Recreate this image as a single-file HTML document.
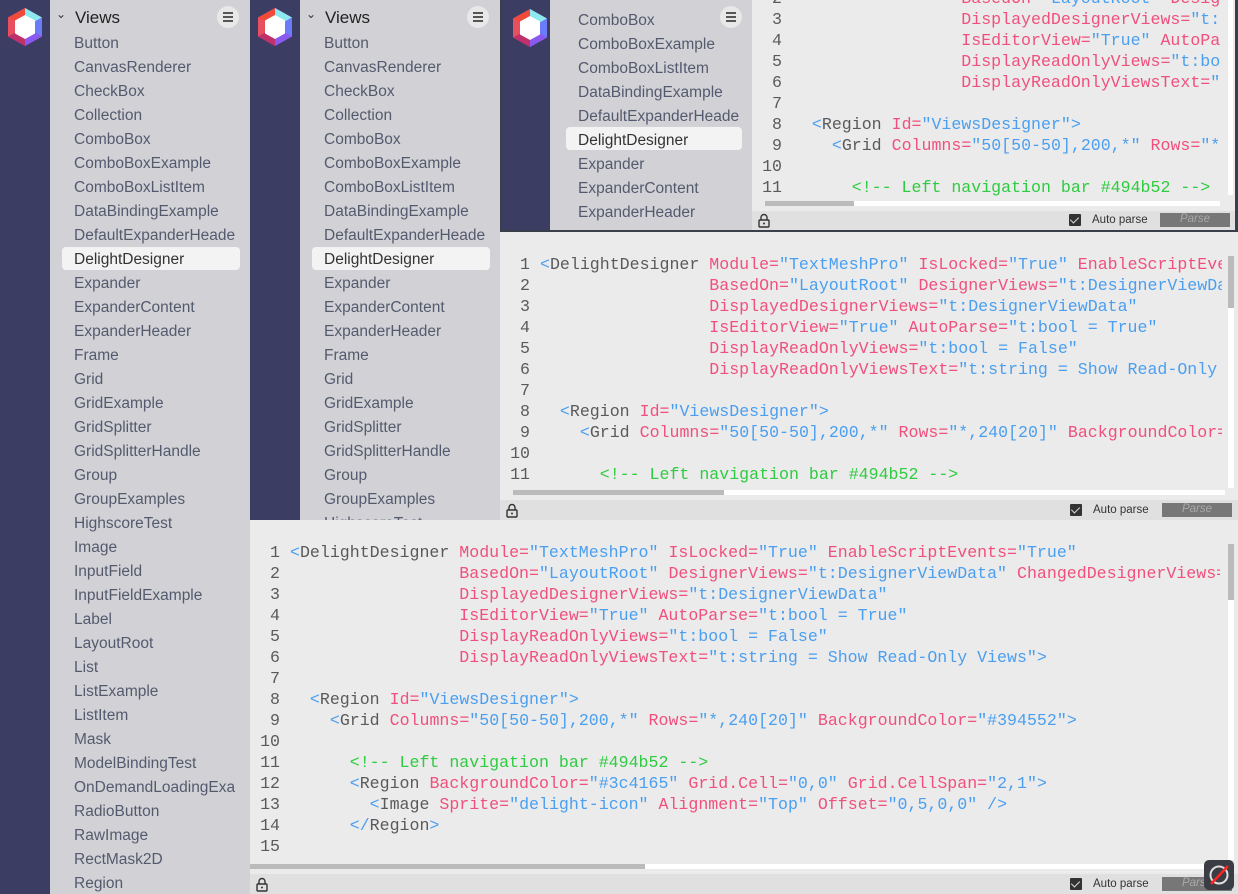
<!DOCTYPE html>
<html><head><meta charset="utf-8"><style>
*{margin:0;padding:0;box-sizing:border-box}
body{width:1238px;height:894px;overflow:hidden;background:#ebebeb;position:relative;font-family:"Liberation Sans",sans-serif}
.abs{position:absolute;overflow:hidden}
.side{background:#3c3d62}
.list{background:#d2d2d6}
.item{position:absolute;font-size:15.5px;color:#545a6e;white-space:nowrap;height:24px;line-height:24px}
.sel{position:absolute;background:#f3f3f3;border-radius:4px}
.hdr{position:absolute;font-size:17px;color:#222}
.menu{position:absolute;width:22px;height:22px;border-radius:11px;background:#e8e8e8}
.menu i{position:absolute;left:6px;width:10px;height:2px;background:#555}
.code{background:#ebebeb}
.code pre{position:absolute;font-family:"Liberation Mono",monospace;font-size:16.6px;line-height:21px;color:#5a5a5a;white-space:pre}
.ln{color:#999;text-align:right}
.t{color:#5a5a5a}.p{color:#4a9ff0}.a{color:#f0507e}.v{color:#4a9ff0}.c{color:#2ecc40}
.foot{position:absolute;background:#e0e0e0}
.chk{position:absolute;width:12px;height:12px;background:#333;border-radius:1px}
.chk:after{content:"";position:absolute;left:3px;top:1px;width:4px;height:7px;border:solid #ddd;border-width:0 1.5px 1.5px 0;transform:rotate(45deg)}
.ap{position:absolute;font-size:11.5px;color:#333}
.parse{position:absolute;background:#777;color:#aaa;font-style:italic;font-size:11.5px;text-align:center;line-height:13px}
.track{position:absolute;height:5px;background:#fff}
.thumb{position:absolute;height:5px;background:#bbb}
</style></head><body>

<svg width="0" height="0" style="position:absolute"><defs>
<g id="logo">
<polygon points="17,0 34,9.5 34,28.5 17,38 0,28.5 0,9.5" fill="#9b5ce0"/>
<polygon points="17,0 0,9.5 0,28.5 17,19" fill="#f04a3a"/>
<polygon points="17,0 34,9.5 17,19" fill="#8ee8f0"/>
<polygon points="34,9.5 34,28.5 17,19" fill="#6a7cf8"/>
<polygon points="34,28.5 17,38 17,19" fill="#8a5af0"/>
<polygon points="17,38 0,28.5 17,19" fill="#c0306a"/>
<polygon points="0,9.5 0,28.5 17,19" fill="#e85060"/>
<polygon points="17,7 27,12.5 27,25.5 17,31 7,25.5 7,12.5" fill="#fff"/>
</g></defs></svg>

<!-- Window 1 -->
<div class="abs side" style="left:0;top:0;width:50px;height:894px"><svg style="position:absolute;left:8px;top:8px" width="34" height="38"><use href="#logo"/></svg></div>
<div class="abs list" style="left:50px;top:0;width:200px;height:894px">
<span class="hdr" style="left:6px;top:7px;font-size:12px;color:#333">&#8964;</span>
<span class="hdr" style="left:25px;top:8px">Views</span>
<div class="menu" style="left:167px;top:6px"><i style="top:6px"></i><i style="top:10px"></i><i style="top:14px"></i></div>
<div class="sel" style="left:12px;top:247px;width:178px;height:23px"></div>
<div style="position:absolute;left:24px;top:32px">
<div class="item" style="top:0">Button</div><div class="item" style="top:24px">CanvasRenderer</div><div class="item" style="top:48px">CheckBox</div><div class="item" style="top:72px">Collection</div><div class="item" style="top:96px">ComboBox</div><div class="item" style="top:120px">ComboBoxExample</div><div class="item" style="top:144px">ComboBoxListItem</div><div class="item" style="top:168px">DataBindingExample</div><div class="item" style="top:192px">DefaultExpanderHeade</div><div class="item" style="top:216px;color:#333">DelightDesigner</div><div class="item" style="top:240px">Expander</div><div class="item" style="top:264px">ExpanderContent</div><div class="item" style="top:288px">ExpanderHeader</div><div class="item" style="top:312px">Frame</div><div class="item" style="top:336px">Grid</div><div class="item" style="top:360px">GridExample</div><div class="item" style="top:384px">GridSplitter</div><div class="item" style="top:408px">GridSplitterHandle</div><div class="item" style="top:432px">Group</div><div class="item" style="top:456px">GroupExamples</div><div class="item" style="top:480px">HighscoreTest</div><div class="item" style="top:504px">Image</div><div class="item" style="top:528px">InputField</div><div class="item" style="top:552px">InputFieldExample</div><div class="item" style="top:576px">Label</div><div class="item" style="top:600px">LayoutRoot</div><div class="item" style="top:624px">List</div><div class="item" style="top:648px">ListExample</div><div class="item" style="top:672px">ListItem</div><div class="item" style="top:696px">Mask</div><div class="item" style="top:720px">ModelBindingTest</div><div class="item" style="top:744px">OnDemandLoadingExa</div><div class="item" style="top:768px">RadioButton</div><div class="item" style="top:792px">RawImage</div><div class="item" style="top:816px">RectMask2D</div><div class="item" style="top:840px">Region</div>
</div></div>

<!-- Window1 code -->
<div class="abs code" style="left:250px;top:520px;width:988px;height:374px">
<pre class="ln" style="left:0;top:22px;width:30px">1
2
3
4
5
6
7
8
9
10
11
12
13
14
15</pre>
<pre style="left:40px;top:22px"><span class="p">&lt;</span>DelightDesigner <span class="a">Module=</span><span class="v">"TextMeshPro"</span> <span class="a">IsLocked=</span><span class="v">"True"</span> <span class="a">EnableScriptEvents=</span><span class="v">"True"</span>
                 <span class="a">BasedOn=</span><span class="v">"LayoutRoot"</span> <span class="a">DesignerViews=</span><span class="v">"t:DesignerViewData"</span> <span class="a">ChangedDesignerViews=</span>
                 <span class="a">DisplayedDesignerViews=</span><span class="v">"t:DesignerViewData"</span>
                 <span class="a">IsEditorView=</span><span class="v">"True"</span> <span class="a">AutoParse=</span><span class="v">"t:bool = True"</span>
                 <span class="a">DisplayReadOnlyViews=</span><span class="v">"t:bool = False"</span>
                 <span class="a">DisplayReadOnlyViewsText=</span><span class="v">"t:string = Show Read-Only Views"</span><span class="p">&gt;</span>

  <span class="p">&lt;</span>Region <span class="a">Id=</span><span class="v">"ViewsDesigner"</span><span class="p">&gt;</span>
    <span class="p">&lt;</span>Grid <span class="a">Columns=</span><span class="v">"50[50-50],200,*"</span> <span class="a">Rows=</span><span class="v">"*,240[20]"</span> <span class="a">BackgroundColor=</span><span class="v">"#394552"</span><span class="p">&gt;</span>

      <span class="c">&lt;!-- Left navigation bar #494b52 --&gt;</span>
      <span class="p">&lt;</span>Region <span class="a">BackgroundColor=</span><span class="v">"#3c4165"</span> <span class="a">Grid.Cell=</span><span class="v">"0,0"</span> <span class="a">Grid.CellSpan=</span><span class="v">"2,1"</span><span class="p">&gt;</span>
        <span class="p">&lt;</span>Image <span class="a">Sprite=</span><span class="v">"delight-icon"</span> <span class="a">Alignment=</span><span class="v">"Top"</span> <span class="a">Offset=</span><span class="v">"0,5,0,0"</span> <span class="p">/&gt;</span>
      <span class="p">&lt;/</span>Region<span class="p">&gt;</span>
</pre>
<div style="position:absolute;left:970px;top:0;width:18px;height:340px;background:#ebebeb"></div>
<div style="position:absolute;left:978px;top:24px;width:6px;height:316px;background:#fff"></div>
<div style="position:absolute;left:978px;top:24px;width:6px;height:56px;background:#bbb"></div>
<div class="track" style="left:0;top:344px;width:975px"></div><div class="thumb" style="left:0;top:344px;width:395px"></div>
<div class="foot" style="left:0;top:354px;width:988px;height:20px"></div>
<svg style="position:absolute;left:6px;top:357px" width="12" height="15"><path d="M3 7V4.5a3 3 0 0 1 6 0V7" fill="none" stroke="#333" stroke-width="1.4"/><rect x="1" y="7" width="10" height="7" rx="1" fill="none" stroke="#333" stroke-width="1.4"/><circle cx="6" cy="10.5" r="1" fill="#333"/></svg>
<div class="chk" style="left:820px;top:358px"></div><div class="ap" style="left:843px;top:358px">Auto parse</div>
<div class="parse" style="left:912px;top:357px;width:70px;height:14px">Parse</div>
<div style="position:absolute;left:954px;top:340px;width:30px;height:30px;background:#3a3d44;border-radius:5px">
<svg width="30" height="30"><circle cx="15" cy="15" r="8.5" fill="none" stroke="#ddd" stroke-width="2"/><line x1="7" y1="24" x2="24" y2="6" stroke="#f22" stroke-width="2.5"/></svg></div>
</div>

<!-- Window 2 -->
<div class="abs side" style="left:250px;top:0;width:50px;height:520px"><svg style="position:absolute;left:8px;top:8px" width="34" height="38"><use href="#logo"/></svg></div>
<div class="abs list" style="left:300px;top:0;width:200px;height:520px">
<span class="hdr" style="left:6px;top:7px;font-size:12px;color:#333">&#8964;</span>
<span class="hdr" style="left:25px;top:8px">Views</span>
<div class="menu" style="left:167px;top:6px"><i style="top:6px"></i><i style="top:10px"></i><i style="top:14px"></i></div>
<div class="sel" style="left:12px;top:247px;width:178px;height:23px"></div>
<div style="position:absolute;left:24px;top:32px">
<div class="item" style="top:0">Button</div><div class="item" style="top:24px">CanvasRenderer</div><div class="item" style="top:48px">CheckBox</div><div class="item" style="top:72px">Collection</div><div class="item" style="top:96px">ComboBox</div><div class="item" style="top:120px">ComboBoxExample</div><div class="item" style="top:144px">ComboBoxListItem</div><div class="item" style="top:168px">DataBindingExample</div><div class="item" style="top:192px">DefaultExpanderHeade</div><div class="item" style="top:216px;color:#333">DelightDesigner</div><div class="item" style="top:240px">Expander</div><div class="item" style="top:264px">ExpanderContent</div><div class="item" style="top:288px">ExpanderHeader</div><div class="item" style="top:312px">Frame</div><div class="item" style="top:336px">Grid</div><div class="item" style="top:360px">GridExample</div><div class="item" style="top:384px">GridSplitter</div><div class="item" style="top:408px">GridSplitterHandle</div><div class="item" style="top:432px">Group</div><div class="item" style="top:456px">GroupExamples</div><div class="item" style="top:480px">HighscoreTest</div>
</div></div>

<div class="abs code" style="left:500px;top:232px;width:738px;height:288px">
<pre class="ln" style="left:0;top:22px;width:30px">1
2
3
4
5
6
7
8
9
10
11</pre>
<pre style="left:40px;top:22px"><span class="p">&lt;</span>DelightDesigner <span class="a">Module=</span><span class="v">"TextMeshPro"</span> <span class="a">IsLocked=</span><span class="v">"True"</span> <span class="a">EnableScriptEvents=</span><span class="v">"True"</span>
                 <span class="a">BasedOn=</span><span class="v">"LayoutRoot"</span> <span class="a">DesignerViews=</span><span class="v">"t:DesignerViewData"</span> <span class="a">ChangedDesignerViews=</span>
                 <span class="a">DisplayedDesignerViews=</span><span class="v">"t:DesignerViewData"</span>
                 <span class="a">IsEditorView=</span><span class="v">"True"</span> <span class="a">AutoParse=</span><span class="v">"t:bool = True"</span>
                 <span class="a">DisplayReadOnlyViews=</span><span class="v">"t:bool = False"</span>
                 <span class="a">DisplayReadOnlyViewsText=</span><span class="v">"t:string = Show Read-Only Views"</span><span class="p">&gt;</span>

  <span class="p">&lt;</span>Region <span class="a">Id=</span><span class="v">"ViewsDesigner"</span><span class="p">&gt;</span>
    <span class="p">&lt;</span>Grid <span class="a">Columns=</span><span class="v">"50[50-50],200,*"</span> <span class="a">Rows=</span><span class="v">"*,240[20]"</span> <span class="a">BackgroundColor=</span><span class="v">"#394552"</span><span class="p">&gt;</span>

      <span class="c">&lt;!-- Left navigation bar #494b52 --&gt;</span>
</pre>
<div style="position:absolute;left:722px;top:0;width:16px;height:268px;background:#ebebeb"></div>
<div style="position:absolute;left:728px;top:24px;width:6px;height:232px;background:#fff"></div>
<div style="position:absolute;left:728px;top:24px;width:6px;height:52px;background:#bbb"></div>
<div class="track" style="left:13px;top:258px;width:712px"></div><div class="thumb" style="left:13px;top:258px;width:211px"></div>
<div class="foot" style="left:0;top:268px;width:738px;height:20px"></div>
<svg style="position:absolute;left:6px;top:271px" width="12" height="15"><path d="M3 7V4.5a3 3 0 0 1 6 0V7" fill="none" stroke="#333" stroke-width="1.4"/><rect x="1" y="7" width="10" height="7" rx="1" fill="none" stroke="#333" stroke-width="1.4"/><circle cx="6" cy="10.5" r="1" fill="#333"/></svg>
<div class="chk" style="left:570px;top:272px"></div><div class="ap" style="left:593px;top:272px">Auto parse</div>
<div class="parse" style="left:662px;top:271px;width:70px;height:14px">Parse</div>
</div>

<!-- Window 3 -->
<div class="abs" style="left:500px;top:0;width:738px;height:232px;background:#39404a">
<div class="abs side" style="left:2px;top:0;width:48px;height:230px"><svg style="position:absolute;left:11px;top:9px" width="34" height="38"><use href="#logo"/></svg></div>
<div class="abs list" style="left:50px;top:0;width:202px;height:230px">
<div class="menu" style="left:170px;top:6px"><i style="top:6px"></i><i style="top:10px"></i><i style="top:14px"></i></div>
<div class="sel" style="left:16px;top:127px;width:176px;height:23px"></div>
<div style="position:absolute;left:28px;top:9px">
<div class="item" style="top:0">ComboBox</div><div class="item" style="top:24px">ComboBoxExample</div><div class="item" style="top:48px">ComboBoxListItem</div><div class="item" style="top:72px">DataBindingExample</div><div class="item" style="top:96px">DefaultExpanderHeade</div><div class="item" style="top:120px;color:#333">DelightDesigner</div><div class="item" style="top:144px">Expander</div><div class="item" style="top:168px">ExpanderContent</div><div class="item" style="top:192px">ExpanderHeader</div><div class="item" style="top:216px">Frame</div>
</div></div>
<div class="abs code" style="left:252px;top:0;width:483px;height:230px">
<pre class="ln" style="left:0;top:-33px;width:30px">1
2
3
4
5
6
7
8
9
10
11</pre>
<pre style="left:40px;top:-33px"><span class="p">&lt;</span>DelightDesigner <span class="a">Module=</span><span class="v">"TextMeshPro"</span> <span class="a">IsLocked=</span><span class="v">"True"</span> <span class="a">EnableScriptEvents=</span><span class="v">"True"</span>
                 <span class="a">BasedOn=</span><span class="v">"LayoutRoot"</span> <span class="a">DesignerViews=</span><span class="v">"t:DesignerViewData"</span>
                 <span class="a">DisplayedDesignerViews=</span><span class="v">"t:DesignerViewData"</span>
                 <span class="a">IsEditorView=</span><span class="v">"True"</span> <span class="a">AutoParse=</span><span class="v">"t:bool = True"</span>
                 <span class="a">DisplayReadOnlyViews=</span><span class="v">"t:bool = False"</span>
                 <span class="a">DisplayReadOnlyViewsText=</span><span class="v">"t:string = Show Read-Only Views"</span><span class="p">&gt;</span>

  <span class="p">&lt;</span>Region <span class="a">Id=</span><span class="v">"ViewsDesigner"</span><span class="p">&gt;</span>
    <span class="p">&lt;</span>Grid <span class="a">Columns=</span><span class="v">"50[50-50],200,*"</span> <span class="a">Rows=</span><span class="v">"*,240[20]"</span> <span class="a">BackgroundColor=</span><span class="v">"#394552"</span><span class="p">&gt;</span>

      <span class="c">&lt;!-- Left navigation bar #494b52 --&gt;</span>
</pre>
<div style="position:absolute;left:468px;top:0;width:15px;height:211px;background:#ebebeb"></div>
<div style="position:absolute;left:476px;top:0;width:5px;height:195px;background:#fff"></div>
<div class="track" style="left:13px;top:201px;width:455px"></div><div class="thumb" style="left:13px;top:201px;width:89px"></div>
<div class="foot" style="left:0;top:211px;width:483px;height:19px"></div>
<svg style="position:absolute;left:6px;top:213px" width="12" height="15"><path d="M3 7V4.5a3 3 0 0 1 6 0V7" fill="none" stroke="#333" stroke-width="1.4"/><rect x="1" y="7" width="10" height="7" rx="1" fill="none" stroke="#333" stroke-width="1.4"/><circle cx="6" cy="10.5" r="1" fill="#333"/></svg>
<div class="chk" style="left:317px;top:214px"></div><div class="ap" style="left:340px;top:214px">Auto parse</div>
<div class="parse" style="left:408px;top:213px;width:70px;height:14px">Parse</div>
</div>
</div>
</body></html>
